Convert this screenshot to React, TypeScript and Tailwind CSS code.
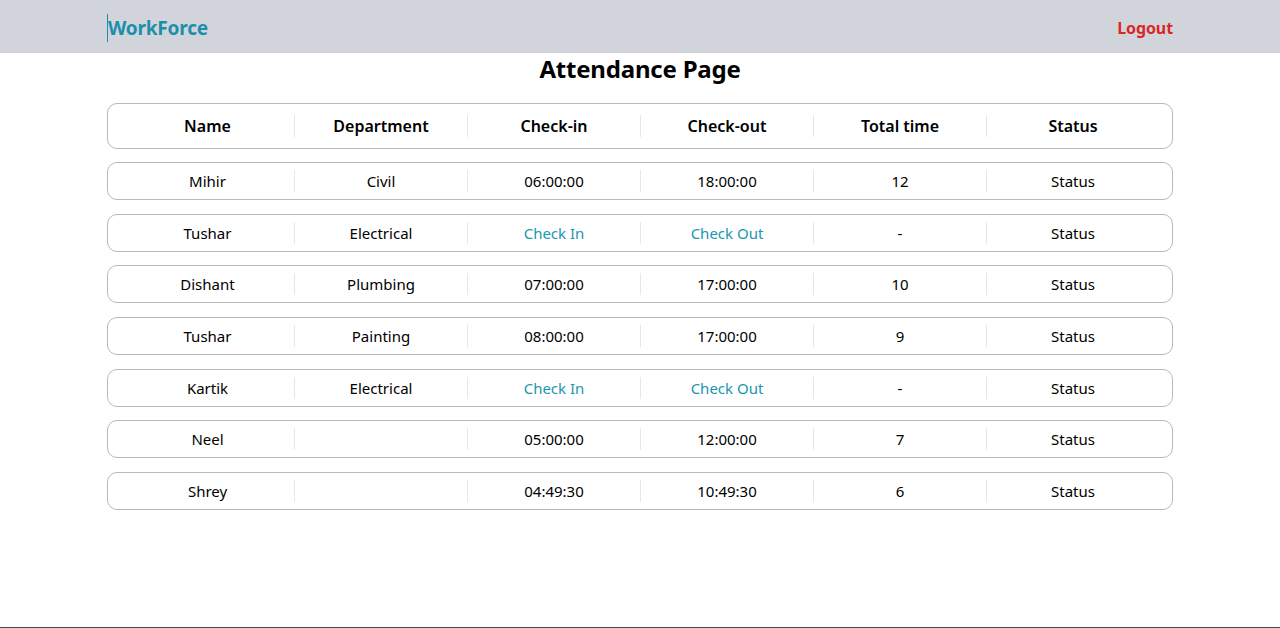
import React from 'react';

type Row = {
  name: string;
  department: string;
  checkIn: string | null;
  checkOut: string | null;
  total: string;
};

const rows: Row[] = [
  { name: 'Mihir', department: 'Civil', checkIn: '06:00:00', checkOut: '18:00:00', total: '12' },
  { name: 'Tushar', department: 'Electrical', checkIn: null, checkOut: null, total: '-' },
  { name: 'Dishant', department: 'Plumbing', checkIn: '07:00:00', checkOut: '17:00:00', total: '10' },
  { name: 'Tushar', department: 'Painting', checkIn: '08:00:00', checkOut: '17:00:00', total: '9' },
  { name: 'Kartik', department: 'Electrical', checkIn: null, checkOut: null, total: '-' },
  { name: 'Neel', department: '', checkIn: '05:00:00', checkOut: '12:00:00', total: '7' },
  { name: 'Shrey', department: '', checkIn: '04:49:30', checkOut: '10:49:30', total: '6' },
];

const headers = ['Name', 'Department', 'Check-in', 'Check-out', 'Total time', 'Status'];

function Cell({ children, first }: { children: React.ReactNode; first?: boolean }) {
  return (
    <div className="flex-1 flex items-center justify-center">
      <div
        className={`w-full min-h-[22px] text-center leading-[22px] ${
          first ? '' : 'border-l border-[#e5e7eb]'
        }`}
      >
        {children}
      </div>
    </div>
  );
}

export default function App() {
  return (
    <div
      className="h-[628px] flex flex-col bg-white text-black border-b border-[#4b4b4b]"
      style={{ fontFamily: '"Noto Sans", "Open Sans", sans-serif' }}
    >
      {/* Navbar */}
      <nav className="h-[53px] bg-[#d1d5db] flex items-center justify-between px-[107px] pt-[2px]">
        <div className="border-l border-[#1b8fab] text-[19px] font-bold text-[#1b8fab] leading-[28px] tracking-[-0.2px]">
          WorkForce
        </div>
        <button className="text-[16px] font-bold text-[#dc2626] tracking-[-0.1px]">Logout</button>
      </nav>

      <main className="px-[107px]">
        <h1 className="text-center text-[24px] font-bold leading-[34px] -mt-[1px] tracking-[-0.2px]">
          Attendance Page
        </h1>

        {/* Header row */}
        <div className="mt-[17px] h-[46px] rounded-[10px] border border-[#b8b8b8] flex px-[13px] text-[16px] font-semibold">
          {headers.map((h, i) => (
            <Cell key={h} first={i === 0}>
              {h}
            </Cell>
          ))}
        </div>

        <div className="mt-[13px] flex flex-col gap-[13.7px]">
          {rows.map((r, i) => (
            <div
              key={i}
              className="h-[38px] rounded-[10px] border border-[#b8b8b8] flex px-[13px] text-[15px]"
            >
              <Cell first>{r.name}</Cell>
              <Cell>{r.department}</Cell>
              <Cell>
                {r.checkIn ?? <span className="text-[#1b96b0] cursor-pointer">Check In</span>}
              </Cell>
              <Cell>
                {r.checkOut ?? <span className="text-[#1b96b0] cursor-pointer">Check Out</span>}
              </Cell>
              <Cell>{r.total}</Cell>
              <Cell>Status</Cell>
            </div>
          ))}
        </div>
      </main>
    </div>
  );
}
